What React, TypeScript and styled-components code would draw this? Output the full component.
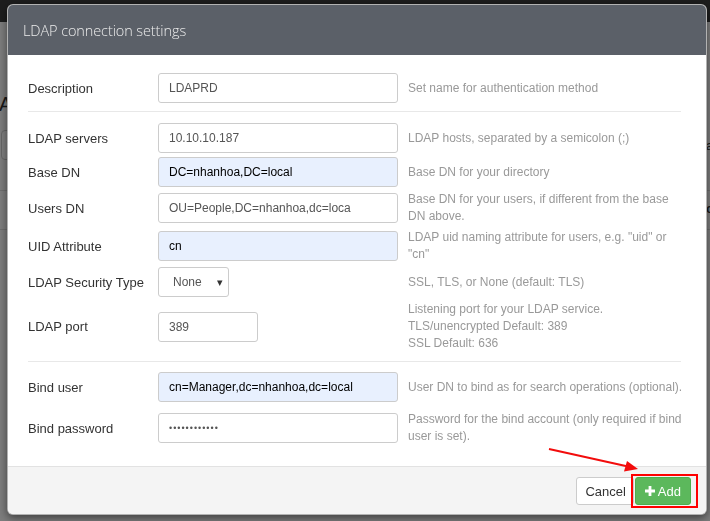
import React from "react";
import styled, { createGlobalStyle } from "styled-components";

const GlobalStyle = createGlobalStyle`
  html, body {
    margin: 0;
    padding: 0;
    background: #ffffff;
    font-family: "Liberation Sans", Arial, sans-serif;
  }
  * { box-sizing: border-box; }
`;

type Field = {
  label: string;
  value: string;
  help: string[];
  autofill?: boolean;
  width?: number;
  kind?: "input" | "select" | "password";
  spaced?: boolean;
};

const topFields: Field[] = [
  { label: "LDAP servers", value: "10.10.10.187", help: ["LDAP hosts, separated by a semicolon (;)"] },
  { label: "Base DN", value: "DC=nhanhoa,DC=local", help: ["Base DN for your directory"], autofill: true },
  {
    label: "Users DN",
    value: "OU=People,DC=nhanhoa,dc=loca",
    help: ["Base DN for your users, if different from the base", "DN above."],
  },
  {
    label: "UID Attribute",
    value: "cn",
    help: ['LDAP uid naming attribute for users, e.g. "uid" or', '"cn"'],
    autofill: true,
  },
  { label: "LDAP Security Type", value: "None", help: ["SSL, TLS, or None (default: TLS)"], kind: "select" },
  {
    label: "LDAP port",
    value: "389",
    width: 100,
    help: ["Listening port for your LDAP service.", "TLS/unencrypted Default: 389", "SSL Default: 636"],
  },
];

const bindFields: Field[] = [
  {
    label: "Bind user",
    value: "cn=Manager,dc=nhanhoa,dc=local",
    help: ["User DN to bind as for search operations (optional)."],
    autofill: true,
  },
  {
    label: "Bind password",
    value: "••••••••••••",
    help: ["Password for the bind account (only required if bind", "user is set)."],
    kind: "password",
    spaced: true,
  },
];

const FieldRow = ({ field }: { field: Field }) => (
  <Row $spaced={field.spaced}>
    <Label>{field.label}</Label>
    <div>
      {field.kind === "select" ? (
        <Select>
          <span>{field.value}</span>
          <Caret>▾</Caret>
        </Select>
      ) : (
        <TextBox $autofill={field.autofill} $width={field.width} $password={field.kind === "password"}>
          {field.value}
        </TextBox>
      )}
    </div>
    <Help>
      {field.help.map((line) => (
        <div key={line}>{line}</div>
      ))}
    </Help>
  </Row>
);

const PlusIcon = () => (
  <svg width="10" height="10" viewBox="0 0 10 10" aria-hidden="true">
    <path d="M3.6 0h2.8v3.6H10v2.8H6.4V10H3.6V6.4H0V3.6h3.6z" fill="#fff" />
  </svg>
);

const App = () => {
  return (
    <>
      <GlobalStyle />
      <Page>
        <NavBar />
        <PageTitle>Authentication Servers</PageTitle>
        <Toolbar>
          <SearchBox />
          <SideText>add</SideText>
        </Toolbar>
        <TableLine $top={30} />
        <TableHead>
          <span />
          <SideText $bold>c</SideText>
        </TableHead>
        <TableLine $top={12} />
      </Page>
      <Overlay />
      <Modal>
        <Header>LDAP connection settings</Header>
        <Body>
          <FieldRow
            field={{ label: "Description", value: "LDAPRD", help: ["Set name for authentication method"] }}
          />
          <Divider $top={6} $bottom={9} />
          {topFields.map((f) => (
            <FieldRow key={f.label} field={f} />
          ))}
          <Divider $top={7} $bottom={8} />
          {bindFields.map((f) => (
            <FieldRow key={f.label} field={f} />
          ))}
        </Body>
        <Footer>
          <CancelButton>Cancel</CancelButton>
          <AddButton>
            <PlusIcon />
            Add
          </AddButton>
        </Footer>
        <Arrow width="100" height="30" viewBox="0 0 100 30">
          <line x1="1" y1="1" x2="80" y2="18.5" stroke="#f20c0c" strokeWidth="2" />
          <polygon points="90,21 76,23.5 79,13" fill="#f20c0c" />
        </Arrow>
      </Modal>
    </>
  );
};

export default App;

const Page = styled.div`
  width: 710px;
  height: 521px;
  overflow: hidden;
  background: #fafafa;
`;

const NavBar = styled.div`
  height: 22px;
  background: #3b3b3b;
`;

const PageTitle = styled.h1`
  margin: 71px 0 0 -1px;
  font-size: 20px;
  font-weight: 400;
  color: #333;
  line-height: 22px;
  white-space: nowrap;
`;

const Toolbar = styled.div`
  display: flex;
  align-items: center;
  justify-content: space-between;
  margin-top: 15px;
  height: 30px;
`;

const SearchBox = styled.div`
  width: 300px;
  height: 30px;
  margin-left: 1px;
  border: 1px solid #ccc;
  border-radius: 4px;
  background: #fff;
`;

const SideText = styled.span<{ $bold?: boolean }>`
  width: 4px;
  overflow: hidden;
  font-size: 13px;
  color: #333;
  font-weight: ${(p) => (p.$bold ? 700 : 400)};
`;

const TableLine = styled.div<{ $top: number }>`
  height: 1px;
  margin-top: ${(p) => p.$top}px;
  background: #ddd;
`;

const TableHead = styled.div`
  display: flex;
  justify-content: space-between;
  margin-top: 10px;
  height: 16px;
`;

const Overlay = styled.div`
  position: fixed;
  inset: 0;
  background: rgba(0, 0, 0, 0.5);
`;

const Modal = styled.div`
  position: absolute;
  top: 4px;
  left: 7px;
  width: 700px;
  height: 511px;
  display: flex;
  flex-direction: column;
  background: #fff;
  border: 1px solid rgba(0, 0, 0, 0.3);
  border-radius: 6px;
  box-shadow: 0 3px 9px rgba(0, 0, 0, 0.5);
  overflow: hidden;
`;

const Header = styled.div`
  height: 50px;
  flex-shrink: 0;
  padding: 15px 15px 0 15px;
  background: #5b6068;
  color: #ececec;
  font-family: "Open Sans", "Liberation Sans", sans-serif;
  font-weight: 300;
  font-size: 14.5px;
  line-height: 22px;
  letter-spacing: -0.1px;
`;

const Body = styled.div`
  flex: 1;
  padding: 16px 25px 0 20px;
`;

const Row = styled.div<{ $spaced?: boolean }>`
  display: grid;
  grid-template-columns: 130px 240px 1fr;
  align-items: center;
  padding: 2px 0;
  margin-top: ${(p) => (p.$spaced ? "5px" : "0")};
`;

const Label = styled.div`
  font-size: 13px;
  color: #333;
  white-space: nowrap;
`;

const TextBox = styled.div<{ $autofill?: boolean; $width?: number; $password?: boolean }>`
  width: ${(p) => p.$width ?? 240}px;
  height: 30px;
  padding: 0 10px;
  display: flex;
  align-items: center;
  border: 1px solid #ccc;
  border-radius: 3px;
  background: ${(p) => (p.$autofill ? "#e8f0fe" : "#fff")};
  color: ${(p) => (p.$autofill ? "#000" : "#555")};
  font-size: ${(p) => (p.$password ? "9px" : "12px")};
  letter-spacing: ${(p) => (p.$password ? "1px" : "0")};
  white-space: nowrap;
  overflow: hidden;
`;

const Select = styled.div`
  width: 71px;
  height: 30px;
  padding: 0 5px 0 14px;
  display: flex;
  align-items: center;
  justify-content: space-between;
  border: 1px solid #ccc;
  border-radius: 3px;
  background: #fff;
  color: #555;
  font-size: 12px;
`;

const Caret = styled.span`
  font-size: 11px;
  color: #333;
`;

const Help = styled.div`
  padding-left: 10px;
  font-size: 12px;
  line-height: 17px;
  color: #999;
  white-space: nowrap;
`;

const Divider = styled.div<{ $top: number; $bottom: number }>`
  height: 1px;
  background: #e8e8e8;
  margin: ${(p) => p.$top}px 0 ${(p) => p.$bottom}px 0;
`;

const Footer = styled.div`
  height: 48px;
  flex-shrink: 0;
  display: flex;
  justify-content: flex-end;
  align-items: flex-start;
  gap: 1px;
  padding: 10px 15px 0 0;
  background: #f4f4f4;
  border-top: 1px solid #e2e2e2;
`;

const BaseButton = styled.button`
  height: 28px;
  display: flex;
  align-items: center;
  gap: 3px;
  border-radius: 3px;
  font-family: "Liberation Sans", Arial, sans-serif;
  font-size: 13px;
`;

const CancelButton = styled(BaseButton)`
  padding: 0 7px 0 8px;
  background: #fff;
  color: #333;
  border: 1px solid #ccc;
`;

const AddButton = styled(BaseButton)`
  position: relative;
  padding: 0 9px;
  background: #5cb85c;
  color: #fff;
  border: 1px solid #4cae4c;

  &::after {
    content: "";
    position: absolute;
    top: -4px;
    bottom: -4px;
    left: -5px;
    right: -8px;
    border: 2px solid #f00;
  }
`;

const Arrow = styled.svg`
  position: absolute;
  left: 540px;
  top: 443px;
  overflow: visible;
`;
